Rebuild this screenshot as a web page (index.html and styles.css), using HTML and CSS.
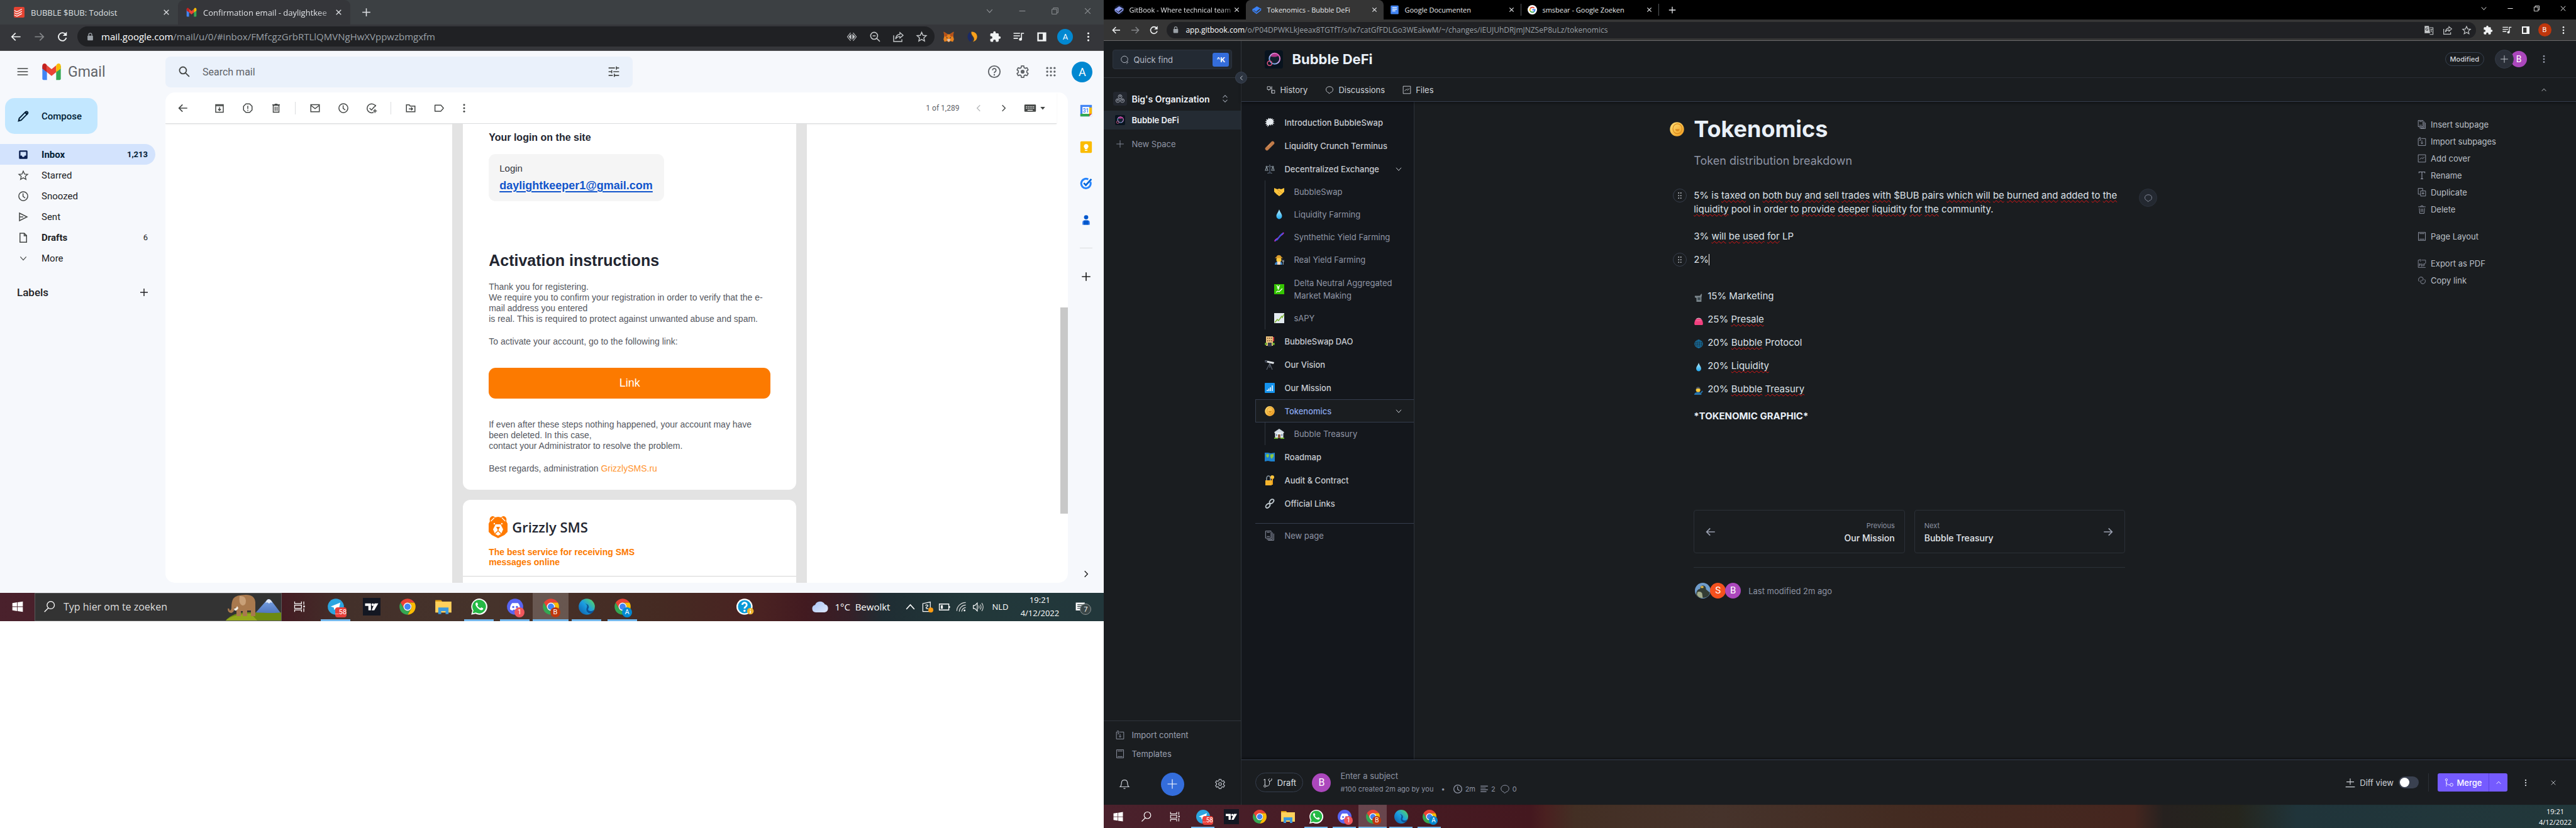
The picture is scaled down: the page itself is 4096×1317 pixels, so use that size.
FILE: index.html
```html
<!DOCTYPE html>
<html lang="en">
<head>
<meta charset="utf-8">
<title>Desktop</title>
<link rel="stylesheet" href="styles.css">
</head>
<body>
<svg class="sprite" aria-hidden="true">
<defs>
<linearGradient id="g-edge" x1="0" y1="1" x2="1" y2="0"><stop offset="0" stop-color="#0c59a4"/><stop offset=".5" stop-color="#1b9de2"/><stop offset="1" stop-color="#5fe04f"/></linearGradient>
<linearGradient id="g-coin" x1="0" y1="0" x2="1" y2="1"><stop offset="0" stop-color="#ffe27a"/><stop offset="1" stop-color="#f09a1c"/></linearGradient>
<linearGradient id="g-drop" x1="0" y1="0" x2="0" y2="1"><stop offset="0" stop-color="#bdf1ff"/><stop offset="1" stop-color="#1ea7ef"/></linearGradient>
<linearGradient id="g-cloud" x1="0" y1="0" x2="1" y2="1"><stop offset="0" stop-color="#a8c4f5"/><stop offset="1" stop-color="#dfe7fb"/></linearGradient>
<linearGradient id="g-bub" x1="0" y1="1" x2="1" y2="0"><stop offset="0" stop-color="#2aa6d8"/><stop offset=".5" stop-color="#c9a8f0"/><stop offset="1" stop-color="#f04aa8"/></linearGradient>
<linearGradient id="g-mtn" x1="0" y1="0" x2="0" y2="1"><stop offset="0" stop-color="#7ba6e8"/><stop offset="1" stop-color="#3a5da8"/></linearGradient>
</defs>
<symbol id="back" viewBox="0 0 24 24"><path d="M21 12H4M11 4.500l-7.500 7.500 7.500 7.500" fill="none" stroke="currentColor" stroke-width="2.200"/></symbol>
<symbol id="fwd" viewBox="0 0 24 24"><path d="M3 12h17M13 4.500l7.500 7.500-7.500 7.500" fill="none" stroke="currentColor" stroke-width="2.200"/></symbol>
<symbol id="reload" viewBox="0 0 24 24"><path d="M19.500 14A8 8 0 1 1 18 7" fill="none" stroke="currentColor" stroke-width="2.400"/><path d="M20.500 2v8h-8z" fill="currentColor"/></symbol>
<symbol id="lock" viewBox="0 0 24 24"><rect x="5" y="9" width="14" height="12" rx="1.500" fill="currentColor"/><path d="M8 10V7a4 4 0 0 1 8 0v3" fill="none" stroke="currentColor" stroke-width="2"/></symbol>
<symbol id="x" viewBox="0 0 24 24"><path d="M5 5l14 14M19 5L5 19" fill="none" stroke="currentColor" stroke-width="2.400"/></symbol>
<symbol id="x-thin" viewBox="0 0 24 24"><path d="M4 4l16 16M20 4L4 20" fill="none" stroke="currentColor" stroke-width="2"/></symbol>
<symbol id="plus" viewBox="0 0 24 24"><path d="M12 3v18M3 12h18" fill="none" stroke="currentColor" stroke-width="2.200"/></symbol>
<symbol id="plus-thin" viewBox="0 0 24 24"><path d="M12 2v20M2 12h20" fill="none" stroke="currentColor" stroke-width="1.500"/></symbol>
<symbol id="down" viewBox="0 0 24 24"><path d="M4 7.500l8 9 8-9" fill="none" stroke="currentColor" stroke-width="2"/></symbol>
<symbol id="up" viewBox="0 0 24 24"><path d="M4 16.500l8-9 8 9" fill="none" stroke="currentColor" stroke-width="2"/></symbol>
<symbol id="left" viewBox="0 0 24 24"><path d="M16 4l-8 8 8 8" fill="none" stroke="currentColor" stroke-width="2.400"/></symbol>
<symbol id="right" viewBox="0 0 24 24"><path d="M8 4l8 8-8 8" fill="none" stroke="currentColor" stroke-width="2.400"/></symbol>
<symbol id="min" viewBox="0 0 24 24"><path d="M3 12h18" stroke="currentColor" stroke-width="2"/></symbol>
<symbol id="restore" viewBox="0 0 24 24"><path d="M3 7h14v14H3zM7 7V3h14v14h-4" fill="none" stroke="currentColor" stroke-width="1.800"/></symbol>
<symbol id="dots" viewBox="0 0 24 24"><g fill="currentColor"><circle cx="12" cy="5" r="2"/><circle cx="12" cy="12" r="2"/><circle cx="12" cy="19" r="2"/></g></symbol>
<symbol id="todoist" viewBox="0 0 24 24"><rect width="24" height="24" rx="3" fill="#e44332"/><path d="M1 8l6 3 11-6M1 13l6 3 11-6M1 18l6 3 11-6" fill="none" stroke="#fff" stroke-width="1.800"/></symbol>
<symbol id="gm" viewBox="0 0 24 24"><path d="M1 5v15.500c0 .8.700 1.500 1.500 1.500H6.500V11z" fill="#4285f4"/><path d="M17.500 22h4c.8 0 1.500-.7 1.500-1.500V5l-5.500 6z" fill="#34a853"/><path d="M6.500 12.500V4.500L12 9l5.500-4.500v8L12 17z" fill="#ea4335"/><path d="M1 8.500V5c0-2.500 2.500-3.600 4.300-2.200L6.500 4.500v8z" fill="#c5221f"/><path d="M23 8.500V5c0-2.500-2.500-3.600-4.300-2.200L17.500 4.500v8z" fill="#fbbc04"/></symbol>
<symbol id="eye" viewBox="0 0 24 24"><path d="M11 6v12l-5.500-6zM13 6v12l5.500-6z" fill="currentColor"/><path d="M9.500 4l-6.500 8 6.500 8M14.500 4l6.500 8-6.500 8" fill="none" stroke="currentColor" stroke-width="1.300"/></symbol>
<symbol id="zoomout" viewBox="0 0 24 24"><circle cx="10" cy="10" r="7" fill="none" stroke="currentColor" stroke-width="2"/><path d="M15 15l6.500 6.500M7 10h6" stroke="currentColor" stroke-width="2"/></symbol>
<symbol id="share" viewBox="0 0 24 24"><path d="M2.500 9v12.500H19V17" fill="none" stroke="currentColor" stroke-width="1.800"/><path d="M15 3.500L21.500 9 15 14.500v-3c-4 0-6.500 1.500-8.500 5 .5-5 3-9 8.500-9.500z" fill="none" stroke="currentColor" stroke-width="1.700"/></symbol>
<symbol id="star" viewBox="0 0 24 24"><path d="M12 3l2.700 6.100 6.600.6-5 4.400 1.500 6.500L12 17.200l-5.800 3.400 1.500-6.500-5-4.400 6.600-.6z" fill="none" stroke="currentColor" stroke-width="1.800"/></symbol>
<symbol id="fox" viewBox="0 0 24 24"><path d="M2 2l8 5h4l8-5-1 9 1.500 6-2 5-5-1.500L12 23l-3.500-2.500L3.500 22l-2-5L3 11z" fill="#e8821e"/><path d="M2 2l8 5-2 5-5-1zM22 2l-8 5 2 5 5-1z" fill="#b5521a"/><path d="M8.500 17.500l2 4h3l2-4-3.500-1.500z" fill="#d7c1b3"/><circle cx="8.500" cy="14" r="1.200" fill="#233447"/><circle cx="15.500" cy="14" r="1.200" fill="#233447"/></symbol>
<symbol id="swirl" viewBox="0 0 24 24"><path d="M9 2C2 6 1 15 8 22c6-3 5-7 3-11S8 5 9 2z" fill="#1b2a66"/><path d="M11 2c9-1 14 8 10 15-2 3-4 4-7 5 4-5 2-8 0-11s-4-5-3-9z" fill="#f9a01b"/></symbol>
<symbol id="puzzle" viewBox="0 0 24 24"><path d="M20.500 11H19V7c0-1.100-.9-2-2-2h-4V3.500a2.500 2.500 0 0 0-5 0V5H4c-1.100 0-2 .9-2 2v3.800h1.500a2.700 2.700 0 0 1 0 5.400H2V20c0 1.100.9 2 2 2h3.800v-1.500a2.700 2.700 0 0 1 5.400 0V22H17c1.100 0 2-.9 2-2v-4h1.500a2.500 2.500 0 0 0 0-5z" fill="currentColor"/></symbol>
<symbol id="music" viewBox="0 0 24 24"><path d="M15 4H2v2h13zm0 5H2v2h13zM2 16h9v-2H2zM17 4v10.200A3 3 0 1 0 19 17V6h4V4z" fill="currentColor"/></symbol>
<symbol id="panel" viewBox="0 0 24 24"><path d="M3 3h18v18H3z M6 6v12h8V6z" fill="currentColor" fill-rule="evenodd"/></symbol>
<symbol id="translate" viewBox="0 0 24 24"><path d="M2 2h10l3 17H2z" fill="currentColor"/><path d="M14 6h8v16h-8" fill="none" stroke="currentColor" stroke-width="1.600"/><path d="M15 10h6M18 9v2c0 3-1 5-2 6M16.500 12c1 3 3 4 4 5" fill="none" stroke="currentColor" stroke-width="1.300"/><path d="M10 7.500a3 3 0 1 0 .5 3H8" fill="none" stroke="#202124" stroke-width="1.400"/></symbol>
<symbol id="menu" viewBox="0 0 24 24"><path d="M2 6h20M2 12h20M2 18h20" stroke="currentColor" stroke-width="2"/></symbol>
<symbol id="search" viewBox="0 0 24 24"><circle cx="9.500" cy="9.500" r="6.500" fill="none" stroke="currentColor" stroke-width="2.200"/><path d="M14.500 14.500l7 7" stroke="currentColor" stroke-width="2.200"/></symbol>
<symbol id="search-l" viewBox="0 0 24 24"><circle cx="14" cy="9" r="7" fill="none" stroke="currentColor" stroke-width="1.600"/><path d="M9.500 14.500L2 22" stroke="currentColor" stroke-width="1.600"/></symbol>
<symbol id="tune" viewBox="0 0 24 24"><path d="M2 5h12M18 5h4M17 2v6M2 12h5M11 12h11M8 9v6M2 19h8M14 19h8M13 16v6" stroke="currentColor" stroke-width="2"/></symbol>
<symbol id="help" viewBox="0 0 24 24"><circle cx="12" cy="12" r="10" fill="none" stroke="currentColor" stroke-width="2"/><path d="M9 9.500a3 3 0 1 1 4.500 2.600c-1 .6-1.500 1.100-1.500 2.400" fill="none" stroke="currentColor" stroke-width="2"/><circle cx="12" cy="17.500" r="1.300" fill="currentColor"/></symbol>
<symbol id="gear" viewBox="0 0 24 24"><path d="M10 2h4l.6 3 2 1.200 3-1 2 3.500-2.300 2v2.600l2.300 2-2 3.500-3-1-2 1.200-.6 3h-4l-.6-3-2-1.200-3 1-2-3.500 2.300-2v-2.600l-2.300-2 2-3.500 3 1 2-1.200z" fill="none" stroke="currentColor" stroke-width="1.900"/><circle cx="12" cy="12" r="3.400" fill="currentColor"/></symbol>
<symbol id="gear-l" viewBox="0 0 24 24"><path d="M10 2h4l.6 3 2 1.200 3-1 2 3.500-2.300 2v2.600l2.300 2-2 3.500-3-1-2 1.200-.6 3h-4l-.6-3-2-1.200-3 1-2-3.500 2.300-2v-2.600l-2.300-2 2-3.500 3 1 2-1.200z" fill="none" stroke="currentColor" stroke-width="1.500"/><circle cx="12" cy="12" r="3" fill="none" stroke="currentColor" stroke-width="1.500"/></symbol>
<symbol id="apps" viewBox="0 0 24 24"><g fill="currentColor"><circle cx="5" cy="5" r="2"/><circle cx="12" cy="5" r="2"/><circle cx="19" cy="5" r="2"/><circle cx="5" cy="12" r="2"/><circle cx="12" cy="12" r="2"/><circle cx="19" cy="12" r="2"/><circle cx="5" cy="19" r="2"/><circle cx="12" cy="19" r="2"/><circle cx="19" cy="19" r="2"/></g></symbol>
<symbol id="pencil" viewBox="0 0 24 24"><path d="M3 21l1.200-5L16.500 3.500c1-1 2.600-1 3.500 0s1 2.500 0 3.500L8 19.500z" fill="none" stroke="currentColor" stroke-width="2.200"/><path d="M3 21l1-4 3 3zM14 5l5 5 2-2.500L17 3z" fill="currentColor"/></symbol>
<symbol id="inbox" viewBox="0 0 24 24"><path d="M5 3h14a2 2 0 0 1 2 2v14a2 2 0 0 1-2 2H5a2 2 0 0 1-2-2V5a2 2 0 0 1 2-2zm1 3v8h3a3 3 0 0 0 6 0h3V6z" fill="currentColor" fill-rule="evenodd"/></symbol>
<symbol id="clock" viewBox="0 0 24 24"><circle cx="12" cy="12" r="9.500" fill="none" stroke="currentColor" stroke-width="2"/><path d="M11.500 6v6.500l4.500 3.500" fill="none" stroke="currentColor" stroke-width="2"/></symbol>
<symbol id="send" viewBox="0 0 24 24"><path d="M4 4l16 8-16 8zM4 12h8" fill="none" stroke="currentColor" stroke-width="2"/></symbol>
<symbol id="doc" viewBox="0 0 24 24"><path d="M5 2.500h9l5 5v14H5zM14 3v5h5" fill="none" stroke="currentColor" stroke-width="2"/></symbol>
<symbol id="archive" viewBox="0 0 24 24"><path d="M4 7V4.500h16V7zM4 7v13.500h16V7M12 10v6M9 14l3 3 3-3" fill="none" stroke="currentColor" stroke-width="2"/></symbol>
<symbol id="report" viewBox="0 0 24 24"><path d="M8 3h8l5 5v8l-5 5H8l-5-5V8z" fill="none" stroke="currentColor" stroke-width="2" stroke-linejoin="round"/><path d="M12 7v6.500M12 15.500v2" stroke="currentColor" stroke-width="2"/></symbol>
<symbol id="trash" viewBox="0 0 24 24"><path d="M6 6h12v14.500H6zM4 5h16M9 3.500h6M10 9v9M14 9v9" fill="none" stroke="currentColor" stroke-width="2"/></symbol>
<symbol id="mail" viewBox="0 0 24 24"><path d="M3 4.500h18v15H3zM3 6l9 7 9-7" fill="none" stroke="currentColor" stroke-width="2"/></symbol>
<symbol id="taskadd" viewBox="0 0 24 24"><path d="M16 21a9.500 9.500 0 1 1 4.500-12.500M7.500 12l4 4L21 5.500M19 14v8M15 18h8" fill="none" stroke="currentColor" stroke-width="2"/></symbol>
<symbol id="folder" viewBox="0 0 24 24"><path d="M3 5h6l2 2.500h10V19.500H3zM8 13.500h8M13 10.500l3 3-3 3" fill="none" stroke="currentColor" stroke-width="2"/></symbol>
<symbol id="label" viewBox="0 0 24 24"><path d="M3.500 5.500H16l5.500 6.500L16 18.500H3.500z" fill="none" stroke="currentColor" stroke-width="2" stroke-linejoin="round"/></symbol>
<symbol id="keyb" viewBox="0 0 24 24"><rect x="1" y="5" width="22" height="14" rx="1.500" fill="currentColor"/><path d="M4 9h16M4 12h16" stroke="#fff" stroke-width="1.500" stroke-dasharray="2 1.400"/><path d="M7 16h10" stroke="#fff" stroke-width="1.500"/></symbol>
<symbol id="caret" viewBox="0 0 24 24"><path d="M3 7h18l-9 11z" fill="currentColor"/></symbol>
<symbol id="keep" viewBox="0 0 24 24"><rect x="1" y="1" width="22" height="22" rx="2" fill="#fbbc04"/><path d="M12 6a4.500 4.500 0 0 0-2.500 8.200V16h5v-1.800A4.500 4.500 0 0 0 12 6zM9.500 17.500h5v1.800h-5z" fill="#fff"/></symbol>
<symbol id="tasks" viewBox="0 0 24 24"><path d="M20 8.500A9 9 0 1 1 16 4" fill="none" stroke="#2684fc" stroke-width="3.600"/><path d="M7.500 11l4 4L22 3.500" fill="none" stroke="#0066da" stroke-width="3.200"/></symbol>
<symbol id="person" viewBox="0 0 24 24"><circle cx="12" cy="6" r="4.500" fill="#0057cc"/><path d="M4 22v-5c0-3 2-4.500 4-4.500h8c2 0 4 1.500 4 4.500v5z" fill="#4f8df0"/><path d="M6.500 22v-6c0-2 1-3.500 3-3.500h5c2 0 3 1.500 3 3.500v6z" fill="#0057cc"/></symbol>
<symbol id="win" viewBox="0 0 24 24"><path d="M2 5l9-1.300V11.500H2zM12 3.600L22 2v9.500H12zM2 12.500h9v7.800L2 19zM12 12.500h10V22l-10-1.500z" fill="#fff"/></symbol>
<symbol id="tview" viewBox="0 0 24 24"><path d="M3 2v4h13V2M3 22v-4h13v4M3 9h13v6H3zM20.500 2v6M20.500 15v7" fill="none" stroke="#fff" stroke-width="1.500"/><rect x="19.500" y="10" width="3" height="3" fill="#fff"/></symbol>
<symbol id="tg" viewBox="0 0 24 24"><circle cx="12" cy="12" r="11" fill="#2ca5e0"/><path d="M5 11.800L18 6.500l-2.300 11-4-3-2 2-.5-3.500z" fill="#fff"/></symbol>
<symbol id="tv" viewBox="0 0 24 24"><rect width="24" height="24" fill="#131722"/><path d="M3 7.500h8v9.500H7.500v-6H3zM15.500 17h-3.600L16 7.500h5z" fill="#fff"/><circle cx="13.500" cy="9.300" r="1.800" fill="#fff"/></symbol>
<symbol id="chrome" viewBox="0 0 24 24"><path d="M2.500 6.500A11 11 0 0 1 21.500 6.500H12L7.200 14.700z" fill="#ea4335"/><path d="M21.500 6.500H12a5.500 5.500 0 0 1 4.800 8.300L12 23A11 11 0 0 0 21.500 6.500z" fill="#fbbc04"/><path d="M2.500 6.500l4.700 8.200a5.500 5.500 0 0 0 9.600.1L12 23A11 11 0 0 1 2.500 6.500z" fill="#34a853"/><circle cx="12" cy="12" r="5.500" fill="#fff"/><circle cx="12" cy="12" r="4.300" fill="#4285f4"/></symbol>
<symbol id="files" viewBox="0 0 24 24"><path d="M1 3h8l2 3h-10z" fill="#e0a012"/><path d="M1 5h22v15H1z" fill="#ffd15c"/><path d="M5 22v-9h14v9h-4v-4H9v4z" fill="#3c99dc"/></symbol>
<symbol id="wa" viewBox="0 0 24 24"><path d="M1 23l1.600-5.500A11 11 0 1 1 7 21.700z" fill="#fff"/><path d="M3 21l1.200-4A9.300 9.300 0 1 1 7.500 20z" fill="#25b945"/><path d="M8 6.500c-1.500.8-1.500 3 .5 5.800 2.300 3 5.500 5 7.500 4.200 1.300-.6 1.600-1.600 1.400-2.400l-2.600-1.300-1.200 1.400c-2-.7-3.300-2-4.200-3.900l1-1.300-1-2.500z" fill="#fff"/></symbol>
<symbol id="discord" viewBox="0 0 24 24"><circle cx="12" cy="12" r="11" fill="#5865f2"/><path d="M8 7l8 0c2 2 3 5.500 3 8.500-1 1-2 1.500-3.500 1.800L14.500 16h-5l-1 1.300C7 17 6 16.500 5 15.500 5 12.500 6 9 8 7z" fill="#fff"/><circle cx="9.500" cy="12.500" r="1.500" fill="#5865f2"/><circle cx="14.500" cy="12.500" r="1.500" fill="#5865f2"/></symbol>
<symbol id="edge" viewBox="0 0 24 24"><circle cx="12" cy="12" r="11" fill="url(#g-edge)"/><path d="M23 13c0 3-3 5-6 5-2 0-3.500-1-3.200-2.500.2-.8 1-1.500 1-3 0-2.500-2-4.500-5-4.500 3 1 3 4 2 6-1.500 4 2 8 7 7l2-1.500z" fill="#0a3e82" opacity=".75"/></symbol>
<symbol id="gethelp" viewBox="0 0 24 24"><circle cx="11" cy="12" r="11" fill="#fff"/><circle cx="11" cy="12" r="9" fill="#0a9bd8"/><path d="M8 9.500a3 3 0 1 1 4.500 2.600c-1 .6-1.500 1.100-1.500 2.400" fill="none" stroke="#fff" stroke-width="2.400"/><circle cx="11" cy="17.500" r="1.500" fill="#fff"/><circle cx="19" cy="18" r="4.500" fill="#f0b32c"/><path d="M19 15v1.300M19 17.300V21" stroke="#fff" stroke-width="1.300"/></symbol>
<symbol id="cloud" viewBox="0 0 28 24"><path d="M7 21a6 6 0 0 1-1-11.800 8.500 8.500 0 0 1 15.500-1A6.500 6.500 0 0 1 21 21z" fill="url(#g-cloud)"/></symbol>
<symbol id="usb" viewBox="0 0 24 24"><path d="M3 5l15-3v19H3zM8 9c4-3 7 0 4 2-4 2-3 5 2 4" fill="none" stroke="#fff" stroke-width="1.500"/><circle cx="19" cy="18" r="5" fill="#ff9c12"/></symbol>
<symbol id="batt" viewBox="0 0 24 24"><path d="M2 6h19v12H2zM22.500 10v4" fill="none" stroke="#fff" stroke-width="1.700"/><path d="M5 8.500h4v7H5z" fill="#fff"/></symbol>
<symbol id="wifi" viewBox="0 0 24 24"><path d="M3 20C3 11 11 3 21 3M8 21c0-7 6-13 13-13M13 21c0-4 3.500-8 8-8" fill="none" stroke="#ddd" stroke-width="1.500"/><circle cx="18.500" cy="19" r="1.800" fill="#fff"/></symbol>
<symbol id="vol" viewBox="0 0 24 24"><path d="M2 9h3l5-5v16l-5-5H2z" fill="none" stroke="#fff" stroke-width="1.500"/><path d="M13 9c1 2 1 4 0 6M16 7c2 3 2 7 0 10M19 4c3.500 5 3.500 11 0 16" fill="none" stroke="#ddd" stroke-width="1.400"/></symbol>
<symbol id="notif" viewBox="0 0 24 24"><path d="M2 3h18v16h-5v3l-3-3H2z" fill="#fff"/><path d="M5 7.500h12M5 11h12M5 14.500h8" stroke="#2a3b3d" stroke-width="1.500"/></symbol>
<symbol id="gb" viewBox="0 0 24 24"><path d="M2 10l10-7 9 5.500-9.500 7z" fill="currentColor"/><path d="M2 10v4.500l9 6.500 10.500-8V8.500M2 10l9.500 6.500" fill="none" stroke="currentColor" stroke-width="2.600"/></symbol>
<symbol id="gdoc" viewBox="0 0 24 24"><rect x="2" y="1" width="20" height="22" rx="2" fill="#4285f4"/><path d="M6 7h12M6 11h12M6 15h8" stroke="#fff" stroke-width="2"/></symbol>
<symbol id="goog" viewBox="0 0 24 24"><circle cx="12" cy="12" r="12" fill="#fff"/><g fill="none" stroke-width="3"><path d="M17 8A6.500 6.500 0 0 0 6.500 9" stroke="#ea4335"/><path d="M6.500 9a6.500 6.500 0 0 0 0 6" stroke="#fbbc04"/><path d="M6.500 15A6.500 6.500 0 0 0 16 17" stroke="#34a853"/><path d="M16 17a6 6 0 0 0 2.500-5H12" stroke="#4285f4"/></g></symbol>
<symbol id="bub" viewBox="0 0 24 24"><rect width="24" height="24" rx="3" fill="#08131e"/><circle cx="13" cy="11" r="7" fill="#10202e" stroke="url(#g-bub)" stroke-width="1.600"/><path d="M7.500 8c2-4 8-5 11-1-3 2-7 2-11 1z" fill="#d63aa0" opacity=".8"/><circle cx="6.500" cy="17" r="3" fill="none" stroke="#e0537d" stroke-width="1.300"/></symbol>
<symbol id="org" viewBox="0 0 24 24"><g fill="none" stroke="currentColor" stroke-width="1.300"><circle cx="12" cy="7" r="4.500"/><circle cx="6.500" cy="16.500" r="4.500"/><circle cx="17.500" cy="16.500" r="4.500"/><circle cx="12" cy="6" r="1.500"/><circle cx="6.500" cy="15.500" r="1.500"/><circle cx="17.500" cy="15.500" r="1.500"/></g></symbol>
<symbol id="updown" viewBox="0 0 24 24"><path d="M6 9l6-6 6 6M6 15l6 6 6-6" fill="none" stroke="currentColor" stroke-width="1.800"/></symbol>
<symbol id="qf" viewBox="0 0 24 24"><circle cx="12" cy="11" r="9" fill="none" stroke="currentColor" stroke-width="1.600"/><path d="M18 18c3-1 4 1 3 2s-3 1-3 3" fill="none" stroke="currentColor" stroke-width="1.600"/></symbol>
<symbol id="hist" viewBox="0 0 24 24"><path d="M2 3h8v8H2zM14 13h8v8h-8zM10 7h4V2M14 7v14M6 11v3" fill="none" stroke="currentColor" stroke-width="1.500"/></symbol>
<symbol id="disc" viewBox="0 0 24 24"><path d="M9 19c-9-2-9-16 3-16s12 14 3 16l-4 3z" fill="none" stroke="currentColor" stroke-width="1.500"/></symbol>
<symbol id="pic" viewBox="0 0 24 24"><path d="M2 2h20v20H2zM6 15l5-5 3 3 5-5M14 8h1" fill="none" stroke="currentColor" stroke-width="1.500"/></symbol>
<symbol id="pages" viewBox="0 0 24 24"><path d="M2 1h13v17H2zM5 4h7M5 14h7M18 4v17H5M21.500 7v16H8" fill="none" stroke="currentColor" stroke-width="1.500"/></symbol>
<symbol id="imp" viewBox="0 0 24 24"><path d="M7 4H2v19h20V4H11M12 9v9M9 15l3 3.500 3-3.500M4 1c5-1 5 1 4 8H5" fill="none" stroke="currentColor" stroke-width="1.500"/></symbol>
<symbol id="tee" viewBox="0 0 24 24"><path d="M4 6V2.500h16V6M12 3v18M8.500 21.500h7" fill="none" stroke="currentColor" stroke-width="1.800"/></symbol>
<symbol id="dup" viewBox="0 0 24 24"><path d="M8 17H2V1h12v6M8.500 8H22v14H8.500zM15 11v7M11.500 14.500h7" fill="none" stroke="currentColor" stroke-width="1.500"/></symbol>
<symbol id="bin" viewBox="0 0 24 24"><path d="M2 5h20M8 5c0-4 8-4 8 0M5 9l1 14h12l1-14M10 10v9M14 10v9" fill="none" stroke="currentColor" stroke-width="1.500"/></symbol>
<symbol id="page" viewBox="0 0 24 24"><path d="M2.500 1h19v22h-19zM5 4.500h14M5 19.500h14" fill="none" stroke="currentColor" stroke-width="1.500"/></symbol>
<symbol id="pdf" viewBox="0 0 24 24"><path d="M7 3H2v20h20M22 12V3H11M6 1c3-1 3 2 2 6M5 20v-7h2.500v3.500H5M11 13v7c4 0 4-7 0-7M17 20v-7h4M17 16h3" fill="none" stroke="currentColor" stroke-width="1.300"/></symbol>
<symbol id="chain" viewBox="0 0 24 24"><path d="M5 15C0 11 4 2 10 3c6 0 7 7 3 10M19 9c5 4 1 13-5 12-6 0-7-7-3-10" fill="none" stroke="currentColor" stroke-width="1.600"/></symbol>
<symbol id="bell" viewBox="0 0 24 24"><path d="M3 18c3-2 2-6 3-10 1-6 11-6 12 0 1 4 0 8 3 10zM10 21.500h4" fill="none" stroke="currentColor" stroke-width="1.600"/></symbol>
<symbol id="branch" viewBox="0 0 24 24"><g fill="none" stroke="currentColor" stroke-width="1.500"><circle cx="5" cy="20" r="2.500"/><path d="M5 17.500V3M2 6l3-3M8 20c8 0 8-4 8-11M16 9l-3-4 3-3M16 9l5-3V2"/></g></symbol>
<symbol id="merge" viewBox="0 0 24 24"><g fill="none" stroke="currentColor" stroke-width="1.500"><circle cx="5" cy="4" r="2.800"/><path d="M5 7v15M5 11c1 5 4 7 10 7"/><circle cx="19" cy="17.500" r="4"/></g></symbol>
<symbol id="pm" viewBox="0 0 24 24"><path d="M12 2v15M3 10h18M1 22h22" fill="none" stroke="currentColor" stroke-width="1.700"/></symbol>
<symbol id="lines" viewBox="0 0 24 24"><path d="M2 4h20M2 9h14M2 14h20M2 19h16" stroke="currentColor" stroke-width="2"/></symbol>
<symbol id="grip" viewBox="0 0 24 24"><g fill="currentColor"><circle cx="9" cy="5" r="1.500"/><circle cx="15" cy="5" r="1.500"/><circle cx="9" cy="12" r="1.500"/><circle cx="15" cy="12" r="1.500"/><circle cx="9" cy="19" r="1.500"/><circle cx="15" cy="19" r="1.500"/></g></symbol>
<symbol id="e-splash" viewBox="0 0 16 16"><path d="M8 2l1.500-1.500.5 2L12.500 1 12 3.500l3-.5-2 2.500 2.500 1-2.500 1 2.500 2.500-3-.5 1 3-3-2-.5 2.500-2-2L4 15.500 5 12l-3 1 1.500-2.500L.500 10 3 8 .500 6l3-.5L2 2.500l3 1L6 .500z" fill="#e6ebef"/></symbol>
<symbol id="e-pill" viewBox="0 0 16 16"><path d="M3.500 12.500l9-9" stroke="#c17b49" stroke-width="5.500" stroke-linecap="round"/><path d="M5 9l4-4" stroke="#dba070" stroke-width="1" stroke-linecap="round"/></symbol>
<symbol id="e-scale" viewBox="0 0 16 16"><path d="M8 1v13M1.500 4h13M4.500 14.500h7M3 4L1 10h4zM13 4l-2 6h4z" fill="none" stroke="#8b98a1" stroke-width="1.200"/><path d="M8 2v12M5.500 14h5" stroke="#3c4654" stroke-width="2"/></symbol>
<symbol id="e-hands" viewBox="0 0 16 16"><path d="M0 2l5 2 3-1 3 1 5-2v6l-5 5-3 2-4-3-4-4z" fill="#fcc43c"/><path d="M5 5l4 2 3 3M6 9l3 3" stroke="#d8922a" fill="none"/></symbol>
<symbol id="e-drop" viewBox="0 0 16 16"><path d="M8 0c1 4 4.500 7 4.500 10.500a4.500 5 0 0 1-9 0C3.500 7 7 4 8 0z" fill="url(#g-drop)"/></symbol>
<symbol id="e-dna" viewBox="0 0 16 16"><path d="M1 15c1-5 5-3 7-7s5-3 7-7" fill="none" stroke="#c02ad0" stroke-width="2.200"/><path d="M2 13c5 1 3-3 6-5s2-5 6-6" fill="none" stroke="#2b5be0" stroke-width="1.800"/></symbol>
<symbol id="e-farmer" viewBox="0 0 16 16"><circle cx="7.500" cy="8" r="4" fill="#fccb3e"/><path d="M1 5.500h13L11 3c-.5-3-6.500-3-7 0z" fill="#d99a2e"/><path d="M1 16c0-4 3-5 6.500-5s5.500 1 5.500 5z" fill="#3d86c8"/><path d="M5 11h5v5H5z" fill="#f4d9c0"/><path d="M14.500 16V9M13 8v3h3V8" stroke="#8b98a1" fill="none"/></symbol>
<symbol id="e-yen" viewBox="0 0 16 16"><rect width="16" height="16" fill="#35c500"/><path d="M4 2l2.500 3L9 2M6.500 5v4M4.500 6h4M3 13l3-2 2 1 5-5" fill="none" stroke="#fff" stroke-width="1.300"/></symbol>
<symbol id="e-chart" viewBox="0 0 16 16"><rect width="16" height="16" fill="#e3eaf0"/><path d="M1 15l4-5 2 2 5-7 1 2 2.500-5" fill="none" stroke="#7db52a" stroke-width="1.400"/></symbol>
<symbol id="e-hotel" viewBox="0 0 16 16"><path d="M2 0h11v15H2z" fill="#e9c17e"/><path d="M4 2h1.500v2H4zM7 2h1.500v2H7zM10 2h1.500v2H10zM4 6h1.500v2H4zM7 6h1.500v2H7zM10 6h1.500v2H10z" fill="#8b5a3c"/><path d="M13 1h2v7h-2z" fill="#c83b3b"/><path d="M5 10h6v6H5z" fill="#33384a"/><circle cx="2" cy="12" r="2" fill="#6cae2e"/><circle cx="14" cy="12" r="2" fill="#6cae2e"/></symbol>
<symbol id="e-scope" viewBox="0 0 16 16"><path d="M0 1l15 3-1 3L1 4z" fill="#dfe4e8"/><path d="M0 1l4 1-.5 3L0 4z" fill="#3a4150"/><path d="M8 6L3 16M8 6l4 10M8 6v7" stroke="#6a7380" stroke-width="1"/></symbol>
<symbol id="e-bars" viewBox="0 0 16 16"><rect width="16" height="16" rx="1" fill="#1493ee"/><path d="M4 13v-2M6.500 13V9M9 13V7M12 13V4" stroke="#fff" stroke-width="1.500"/></symbol>
<symbol id="e-coin" viewBox="0 0 16 16"><ellipse cx="8" cy="8" rx="7.800" ry="7.900" fill="url(#g-coin)"/><ellipse cx="8.500" cy="7.500" rx="5" ry="5.500" fill="none" stroke="#d98a1b" stroke-width=".8"/><path d="M6 8c1 3 4 3 5 0" fill="#d98a1b"/></symbol>
<symbol id="e-bank" viewBox="0 0 16 16"><path d="M8 0l7.500 5v2H.500V5z" fill="#cfd8e0"/><path d="M1.500 6h13v9h-13z" fill="#e9eef2"/><path d="M6 9h4v6H6z" fill="#8a5a3e"/><path d="M3 8h1.500v4H3zM11.500 8H13v4h-1.500z" fill="#6a86a8"/><path d="M0 14h6v2H0zM10 14h6v2h-6z" fill="#6cae2e"/></symbol>
<symbol id="e-map" viewBox="0 0 16 16"><path d="M0 1l5 0 5 1 6-1v14l-6 0-5-1-5 1z" fill="#1e82cf"/><path d="M2 4l4-1 1 3-2 3-2-1zM9 4l5-1 0 4-3 4-2-3z" fill="#8cc63f"/></symbol>
<symbol id="e-lock" viewBox="0 0 16 16"><path d="M3 8V5a3 4 0 0 1 6 0v3" fill="none" stroke="#8b98a1" stroke-width="1.600"/><path d="M1 8h10v8H1z" fill="#f7b42c"/><circle cx="12" cy="3" r="3" fill="#fcc43c"/><path d="M12 5v10" stroke="#e89f1e" stroke-width="2"/></symbol>
<symbol id="e-link" viewBox="0 0 16 16"><g fill="none" stroke="#c3ccd2" stroke-width="1.800"><ellipse cx="11" cy="4.500" rx="2.600" ry="4" transform="rotate(45 11 4.500)"/><ellipse cx="5" cy="11.500" rx="2.600" ry="4" transform="rotate(45 5 11.500)"/></g></symbol>
<symbol id="e-cam" viewBox="0 0 16 16"><path d="M1 5h9l3-4 1 2-1 5v8H4V9L1 8z" fill="#7c878d"/><path d="M6 8h5v5H6z" fill="#3c4950"/></symbol>
<symbol id="e-purse" viewBox="0 0 16 16"><path d="M3 5c3-2 7-2 10 0 3 4 4 11 1 11H2c-3 0-2-7 1-11z" fill="#f2407f"/><path d="M4 5c2-2 6-2 8 0" stroke="#c9b6c0" fill="none" stroke-width="1.500"/><path d="M3 8h10" stroke="#ff7fae"/></symbol>
<symbol id="e-globe" viewBox="0 0 16 16"><g fill="none" stroke="#1784bf" stroke-width="1.100"><circle cx="8" cy="8" r="7"/><ellipse cx="8" cy="8" rx="3.500" ry="7"/><path d="M1 8h14M2 4.500h12M2 11.500h12M8 1v14"/></g></symbol>
<symbol id="e-judge" viewBox="0 0 16 16"><circle cx="7" cy="7" r="4" fill="#fccb3e"/><path d="M3 6c0-6 8-6 8 0-2-2-6-2-8 0z" fill="#4a5560"/><path d="M0 16c0-4 3-5 7-5s6 1 6 5z" fill="#2674ad"/><path d="M12 13l3-4" stroke="#2674ad" stroke-width="2"/></symbol>
</svg>

<main class="desk">
<section class="win win-left">
  <header class="tabs">
    <div class="tab"><svg class="fav"><use href="#todoist"/></svg><span class="tt">BUBBLE $BUB: Todoist</span><button class="cls" aria-label="Close tab"><svg><use href="#x"/></svg></button></div>
    <div class="tab on"><svg class="fav"><use href="#gm"/></svg><span class="tt fade">Confirmation email - daylightkee</span><button class="cls" aria-label="Close tab"><svg><use href="#x"/></svg></button></div>
    <button class="newtab" aria-label="New tab"><svg><use href="#plus"/></svg></button>
    <div class="wctl"><button aria-label="Tab search"><svg><use href="#down"/></svg></button><button aria-label="Minimise"><svg><use href="#min"/></svg></button><button aria-label="Restore"><svg><use href="#restore"/></svg></button><button aria-label="Close"><svg><use href="#x-thin"/></svg></button></div>
  </header>
  <nav class="bar">
    <button aria-label="Back"><svg><use href="#back"/></svg></button><button class="dim" aria-label="Forward"><svg><use href="#fwd"/></svg></button><button aria-label="Reload"><svg><use href="#reload"/></svg></button>
    <div class="omni"><svg class="lock"><use href="#lock"/></svg><span class="url"><b>mail.google.com</b>/mail/u/0/#inbox/FMfcgzGrbRTLlQMVNgHwXVppwzbmgxfm</span>
      <button aria-label="Privacy"><svg><use href="#eye"/></svg></button><button aria-label="Zoom"><svg><use href="#zoomout"/></svg></button><button aria-label="Share"><svg><use href="#share"/></svg></button><button aria-label="Bookmark"><svg><use href="#star"/></svg></button></div>
    <button aria-label="Wallet"><svg><use href="#fox"/></svg></button><button aria-label="Swirl"><svg><use href="#swirl"/></svg></button><button aria-label="Extensions"><svg><use href="#puzzle"/></svg></button><button aria-label="Media"><svg><use href="#music"/></svg></button><button aria-label="Side panel"><svg><use href="#panel"/></svg></button><button aria-label="Profile"><span class="ava blue">A</span></button><button aria-label="Menu"><svg><use href="#dots"/></svg></button>
  </nav>

  <div class="gmail">
    <header class="ghead">
      <div class="brand"><button aria-label="Main menu"><svg class="s20"><use href="#menu"/></svg></button><svg class="glogo"><use href="#gm"/></svg><span class="gname">Gmail</span></div>
      <div class="gsearch"><svg class="s20"><use href="#search"/></svg><input type="text" placeholder="Search mail" aria-label="Search mail"><button aria-label="Search options"><svg class="s20"><use href="#tune"/></svg></button></div>
      <div class="gtools"><button aria-label="Support"><svg class="s22"><use href="#help"/></svg></button><button aria-label="Settings"><svg class="s22"><use href="#gear"/></svg></button><button aria-label="Apps"><svg class="s20"><use href="#apps"/></svg></button><button class="acct" aria-label="Account">A</button></div>
    </header>
    <aside class="gnav">
      <button class="compose"><svg class="s20"><use href="#pencil"/></svg>Compose</button>
      <a class="on" href="#inbox"><svg class="s18"><use href="#inbox"/></svg><span>Inbox</span><i>1,213</i></a>
      <a href="#starred"><svg class="s18"><use href="#star"/></svg><span>Starred</span></a>
      <a href="#snoozed"><svg class="s18"><use href="#clock"/></svg><span>Snoozed</span></a>
      <a href="#sent"><svg class="s18"><use href="#send"/></svg><span>Sent</span></a>
      <a class="bold" href="#drafts"><svg class="s18"><use href="#doc"/></svg><span>Drafts</span><i>6</i></a>
      <a href="#more"><svg class="s14"><use href="#down"/></svg><span>More</span></a>
      <div class="labels"><span>Labels</span><button aria-label="Create label"><svg class="s16"><use href="#plus"/></svg></button></div>
    </aside>
    <section class="gcard">
      <div class="gbar">
        <button class="first" aria-label="Back to inbox"><svg><use href="#back"/></svg></button>
        <button aria-label="Archive"><svg><use href="#archive"/></svg></button><button aria-label="Report spam"><svg><use href="#report"/></svg></button><button aria-label="Delete"><svg><use href="#trash"/></svg></button><hr>
        <button aria-label="Mark as unread"><svg><use href="#mail"/></svg></button><button aria-label="Snooze"><svg><use href="#clock"/></svg></button><button aria-label="Add to tasks"><svg><use href="#taskadd"/></svg></button><hr>
        <button aria-label="Move to"><svg><use href="#folder"/></svg></button><button aria-label="Labels"><svg><use href="#label"/></svg></button><button class="dd" aria-label="More"><svg><use href="#dots"/></svg></button>
        <span class="count">1 of 1,289</span><button class="faint pg" aria-label="Newer"><svg class="s14"><use href="#left"/></svg></button><button class="pg" aria-label="Older"><svg class="s14"><use href="#right"/></svg></button><button class="kb" aria-label="Input tools"><svg class="s20"><use href="#keyb"/></svg><svg class="s10"><use href="#caret"/></svg></button>
      </div>
      <div class="gscroll">
        <article class="mail">
          <div class="mcard first">
            <h3>Your login on the site</h3>
            <div class="login"><span>Login</span><a href="mailto:daylightkeeper1@gmail.com">daylightkeeper1@gmail.com</a></div>
            <h2>Activation instructions</h2>
            <p>Thank you for registering.<br>We require you to confirm your registration in order to verify that the e-<br>mail address you entered<br>is real. This is required to protect against unwanted abuse and spam.</p>
            <p>To activate your account, go to the following link:</p>
            <button class="link">Link</button>
            <p>If even after these steps nothing happened, your account may have<br>been deleted. In this case,<br>contact your Administrator to resolve the problem.</p>
            <p>Best regards, administration <a href="#grizzly">GrizzlySMS.ru</a></p>
          </div>
          <div class="mcard second">
            <div class="grizzly"><svg viewBox="0 0 30 36"><path d="M2 9C0 3 6-2 10 3l5-1 5 1c4-5 10 0 8 6l2 4v13l-5 5-10 5-10-5-5-5V13z" fill="#ff7a00"/><path d="M3.500 9L9 3.500M26.500 9L21 3.500" stroke="#fff" stroke-width="1.200"/><path d="M11 14h8l4 8-3 7-5 3-5-3-3-7z" fill="#fff"/><path d="M12 18h6l-2 4h-2z" fill="#ff7a00"/><path d="M10 29l5-5 5 5M15 21v4" fill="none" stroke="#ff7a00" stroke-width="1.500"/><circle cx="9" cy="13" r="1.200" fill="#fff"/><circle cx="21" cy="13" r="1.200" fill="#fff"/></svg>Grizzly SMS</div>
            <strong>The best service for receiving SMS<br>messages online</strong>
            <hr>
          </div>
        </article>
        <div class="thumb"></div>
      </div>
    </section>
    <aside class="gside">
      <button aria-label="Calendar"><svg class="s20" viewBox="0 0 24 24"><path d="M1 1h22v22H1z" fill="#4285f4"/><path d="M18 6h5v12h-5z" fill="#fbbc04"/><path d="M6 18h12v5H1v-5z" fill="#34a853"/><path d="M18 18h5l-5 5z" fill="#ea4335"/><path d="M18 23l5-5v5z" fill="#f7f9fc"/><path d="M5 5h13v13H5z" fill="#fff"/><text x="11.500" y="15.500" text-anchor="middle" class="cal">31</text></svg></button>
      <button aria-label="Keep"><svg class="s20"><use href="#keep"/></svg></button>
      <button aria-label="Tasks"><svg class="s20"><use href="#tasks"/></svg></button>
      <button aria-label="Contacts"><svg class="s18"><use href="#person"/></svg></button>
      <hr>
      <button aria-label="Get add-ons"><svg class="s18"><use href="#plus"/></svg></button>
      <button class="hide" aria-label="Hide side panel"><svg class="s14"><use href="#right"/></svg></button>
    </aside>
  </div>

  <footer class="task task-left">
    <button class="start" aria-label="Start"><svg class="s20"><use href="#win"/></svg></button>
    <label class="tsearch"><svg class="s20"><use href="#search-l"/></svg><input type="text" placeholder="Typ hier om te zoeken" aria-label="Typ hier om te zoeken">
      <svg class="eleph" viewBox="0 0 88 43"><path d="M48 30L64 12q4-6 9 0l15 20v11H48z" fill="url(#g-mtn)"/><path d="M65 11q3-4 7 0l2 4-3-1-2 2-3-2-3 1z" fill="#dfe8f8"/><path d="M0 43Q12 28 45 30t43 0v13z" fill="#6d8a12"/><path d="M0 43Q10 33 40 32l10 11z" fill="#93a81c"/><path d="M12 8q4-6 20-6 14 0 15 12v22h-7v-9h-6v9h-7v-8h-3v8h-7V26l-3-4q0 7-5 9-6 0-6-7 3-1 3 3 3 0 3-5 0-9 3-14z" fill="#a9794e"/><path d="M22 4q9-1 10 7 0 9-6 8-6-3-4-15z" fill="#c9a078"/><path d="M13 24q4 0 5-4l2 3q-2 5-6 4z" fill="#f4efe6"/></svg></label>
    <button class="tv" aria-label="Task view"><svg class="s20"><use href="#tview"/></svg></button>
    <div class="apps">
      <button class="run" aria-label="Telegram"><svg><use href="#tg"/></svg><em class="bd red">..58</em></button><button aria-label="TradingView"><svg><use href="#tv"/></svg></button><button aria-label="Chrome"><svg><use href="#chrome"/></svg></button><button aria-label="Explorer"><svg><use href="#files"/></svg></button><button class="run" aria-label="WhatsApp"><svg><use href="#wa"/></svg></button><button class="run" aria-label="Discord"><svg><use href="#discord"/></svg><em class="bd rose">1</em></button><button class="run cur" aria-label="Chrome B"><svg><use href="#chrome"/></svg><em class="bd rust">B</em></button><button class="run" aria-label="Edge"><svg><use href="#edge"/></svg></button><button class="run" aria-label="Chrome A"><svg><use href="#chrome"/></svg><em class="bd sky">A</em></button>
    </div>
    <button class="gh" aria-label="Get help"><svg><use href="#gethelp"/></svg></button>
    <div class="tray"><svg class="cloud"><use href="#cloud"/></svg><span class="wx">1°C&nbsp; Bewolkt</span>
      <button aria-label="Hidden icons"><svg><use href="#up"/></svg></button><button aria-label="Update"><svg><use href="#usb"/></svg></button><button aria-label="Battery"><svg><use href="#batt"/></svg></button><button aria-label="Network"><svg><use href="#wifi"/></svg></button><button aria-label="Volume"><svg><use href="#vol"/></svg></button><span class="lang">NLD</span>
      <time class="clk">19:21<br>4/12/2022</time><button class="nt" aria-label="Notifications"><svg><use href="#notif"/></svg><em>7</em></button></div>
  </footer>
</section>

<section class="win win-right">
  <header class="tabs">
    <div class="tab"><svg class="fav c-lav"><use href="#gb"/></svg><span class="tt fade">GitBook - Where technical team</span><button class="cls" aria-label="Close tab"><svg><use href="#x"/></svg></button></div>
    <div class="tab on"><svg class="fav c-blue"><use href="#gb"/></svg><span class="tt">Tokenomics - Bubble DeFi</span><button class="cls" aria-label="Close tab"><svg><use href="#x"/></svg></button></div>
    <div class="tab sep"><svg class="fav"><use href="#gdoc"/></svg><span class="tt">Google Documenten</span><button class="cls" aria-label="Close tab"><svg><use href="#x"/></svg></button></div>
    <div class="tab sep"><svg class="fav"><use href="#goog"/></svg><span class="tt">smsbear - Google Zoeken</span><button class="cls" aria-label="Close tab"><svg><use href="#x"/></svg></button></div>
    <button class="newtab" aria-label="New tab"><svg><use href="#plus"/></svg></button>
    <div class="wctl"><button aria-label="Tab search"><svg><use href="#down"/></svg></button><button aria-label="Minimise"><svg><use href="#min"/></svg></button><button aria-label="Restore"><svg><use href="#restore"/></svg></button><button aria-label="Close"><svg><use href="#x-thin"/></svg></button></div>
  </header>
  <nav class="bar">
    <button aria-label="Back"><svg><use href="#back"/></svg></button><button class="dim" aria-label="Forward"><svg><use href="#fwd"/></svg></button><button aria-label="Reload"><svg><use href="#reload"/></svg></button>
    <div class="omni"><svg class="lock"><use href="#lock"/></svg><span class="url"><b>app.gitbook.com</b>/o/P04DPWKLkJeeax8TGTfT/s/Ix7catGfFDLGo3WEakwM/~/changes/iEUJUhDRjmJNZSeP8uLz/tokenomics</span>
      <button aria-label="Translate"><svg><use href="#translate"/></svg></button><button aria-label="Share"><svg><use href="#share"/></svg></button><button aria-label="Bookmark"><svg><use href="#star"/></svg></button></div>
    <button aria-label="Extensions"><svg><use href="#puzzle"/></svg></button><button aria-label="Media"><svg><use href="#music"/></svg></button><button aria-label="Side panel"><svg><use href="#panel"/></svg></button><button aria-label="Profile"><span class="ava rust">B</span></button><button aria-label="Menu"><svg><use href="#dots"/></svg></button>
  </nav>
  <div class="app">
    <aside class="side">
      <div class="qf"><button><svg class="s14"><use href="#qf"/></svg><span>Quick find</span><kbd>^K</kbd></button></div>
      <button class="fold" aria-label="Collapse sidebar"><svg class="s10"><use href="#left"/></svg></button>
      <div class="org"><span class="obox"><svg class="s16"><use href="#org"/></svg></span><strong>Big's Organization</strong><svg class="s14"><use href="#updown"/></svg></div>
      <a class="space" href="#bubble"><svg class="s16"><use href="#bub"/></svg>Bubble DeFi</a>
      <a class="newsp" href="#new"><svg class="s14"><use href="#plus-thin"/></svg>New Space</a>
      <div class="sfoot">
        <a href="#import"><svg class="s14"><use href="#imp"/></svg>Import content</a>
        <a href="#templates"><svg class="s14"><use href="#page"/></svg>Templates</a>
        <div class="sbtns"><button aria-label="Notifications"><svg class="s18"><use href="#bell"/></svg></button><button class="add" aria-label="Create"><svg class="s18"><use href="#plus-thin"/></svg></button><button aria-label="Settings"><svg class="s18"><use href="#gear-l"/></svg></button></div>
      </div>
    </aside>
    <div class="book">
      <header class="bhead"><svg class="blogo"><use href="#bub"/></svg><h1>Bubble DeFi</h1><span class="pill">Modified</span><button class="plus" aria-label="Invite"><svg class="s14"><use href="#plus-thin"/></svg></button><span class="who">B</span><button class="more" aria-label="More"><svg class="s16"><use href="#dots"/></svg></button></header>
      <nav class="btabs"><a href="#history"><svg class="s14"><use href="#hist"/></svg>History</a><a href="#discussions"><svg class="s14"><use href="#disc"/></svg>Discussions</a><a href="#files-tab"><svg class="s14"><use href="#pic"/></svg>Files</a><button class="more" aria-label="Collapse"><svg class="s10"><use href="#up"/></svg></button></nav>
      <div class="cols">
        <nav class="toc">
          <a href="#t1"><svg><use href="#e-splash"/></svg>Introduction BubbleSwap</a>
          <a href="#t2"><svg><use href="#e-pill"/></svg>Liquidity Crunch Terminus</a>
          <a href="#t3"><svg><use href="#e-scale"/></svg>Decentralized Exchange<svg class="chev"><use href="#down"/></svg></a>
          <div class="kids">
            <a href="#k1"><svg><use href="#e-hands"/></svg>BubbleSwap</a>
            <a href="#k2"><svg><use href="#e-drop"/></svg>Liquidity Farming</a>
            <a href="#k3"><svg><use href="#e-dna"/></svg>Synthethic Yield Farming</a>
            <a href="#k4"><svg><use href="#e-farmer"/></svg>Real Yield Farming</a>
            <a class="two" href="#k5"><svg><use href="#e-yen"/></svg><span>Delta Neutral Aggregated Market Making</span></a>
            <a href="#k6"><svg><use href="#e-chart"/></svg>sAPY</a>
          </div>
          <a href="#t4"><svg><use href="#e-hotel"/></svg>BubbleSwap DAO</a>
          <a href="#t5"><svg><use href="#e-scope"/></svg>Our Vision</a>
          <a href="#t6"><svg><use href="#e-bars"/></svg>Our Mission</a>
          <a class="on" href="#t7"><svg><use href="#e-coin"/></svg>Tokenomics<svg class="chev"><use href="#down"/></svg></a>
          <div class="kids"><a href="#k7"><svg><use href="#e-bank"/></svg>Bubble Treasury</a></div>
          <a href="#t8"><svg><use href="#e-map"/></svg>Roadmap</a>
          <a href="#t9"><svg><use href="#e-lock"/></svg>Audit &amp; Contract</a>
          <a href="#t10"><svg><use href="#e-link"/></svg>Official Links</a>
          <a class="np" href="#np"><svg><use href="#pages"/></svg>New page</a>
        </nav>
        <div class="page">
          <article class="doc">
            <div class="row title"><svg class="coin"><use href="#e-coin"/></svg><h2>Tokenomics</h2></div>
            <div class="row sub"><p>Token distribution breakdown</p></div>
            <div class="row para"><button class="grip" aria-label="Drag"><svg class="s14"><use href="#grip"/></svg></button><p>5% is <u>taxed</u> on <u>both</u> <u>buy</u> <u>and</u> <u>sell</u> <u>trades</u> <u>with</u> $BUB pairs <u>which</u> <u>will</u> <u>be</u> <u>burned</u> <u>and</u> <u>added</u> <u>to</u> <u>the</u><br><u>liquidity</u> pool in order <u>to</u> <u>provide</u> <u>deeper</u> <u>liquidity</u> <u>for</u> <u>the</u> community.</p><button class="cmt" aria-label="Comment"><svg class="s14"><use href="#disc"/></svg></button></div>
            <div class="row lp"><p>3% <u>will</u> <u>be</u> <u>used</u> <u>for</u> LP</p></div>
            <div class="row two-pc"><button class="grip" aria-label="Drag"><svg class="s14"><use href="#grip"/></svg></button><p>2%<span class="cursor"></span></p></div>
            <ul>
              <li><svg><use href="#e-cam"/></svg>15% Marketing</li>
              <li><svg><use href="#e-purse"/></svg><span>25% <u>Presale</u></span></li>
              <li><svg><use href="#e-globe"/></svg><span>20% <u>Bubble</u> Protocol</span></li>
              <li><svg><use href="#e-drop"/></svg><span>20% <u>Liquidity</u></span></li>
              <li><svg><use href="#e-judge"/></svg><span>20% <u>Bubble</u> <u>Treasury</u></span></li>
            </ul>
            <div class="row graphic"><strong>*TOKENOMIC GRAPHIC*</strong></div>
            <div class="pager">
              <a href="#prev"><svg class="s18"><use href="#back"/></svg><span class="r"><small>Previous</small>Our Mission</span></a>
              <a href="#next"><span><small>Next</small>Bubble Treasury</span><svg class="s18"><use href="#fwd"/></svg></a>
            </div>
            <div class="mod"><span class="av photo"><svg viewBox="0 0 24 24"><circle cx="12" cy="12" r="12" fill="#6f9ccb"/><path d="M2 18q0-8 6-9 0-5 5-5 4 1 4 6l6 5q-2 8-11 8-8 0-10-5z" fill="#333c34"/><path d="M4 14q5-2 7 2l1 7q-7 0-9-5z" fill="#a3ac8b"/><path d="M9 5h4v3H9z" fill="#e0b64a"/></svg></span><span class="av orange">S</span><span class="av violet">B</span><span class="mtext">Last modified 2m ago</span></div>
          </article>
          <aside class="acts">
            <a href="#a1"><svg><use href="#pages"/></svg>Insert subpage</a>
            <a href="#a2"><svg><use href="#imp"/></svg>Import subpages</a>
            <a href="#a3"><svg><use href="#pic"/></svg>Add cover</a>
            <a href="#a4"><svg><use href="#tee"/></svg>Rename</a>
            <a href="#a5"><svg><use href="#dup"/></svg>Duplicate</a>
            <a href="#a6"><svg><use href="#bin"/></svg>Delete</a>
            <a class="gap" href="#a7"><svg><use href="#page"/></svg>Page Layout</a>
            <a class="gap" href="#a8"><svg><use href="#pdf"/></svg>Export as PDF</a>
            <a href="#a9"><svg><use href="#chain"/></svg>Copy link</a>
          </aside>
        </div>
      </div>
      <footer class="bbar">
        <button class="draft"><svg class="s16"><use href="#branch"/></svg>Draft</button><span class="av violet big">B</span>
        <div class="subj"><input type="text" placeholder="Enter a subject" aria-label="Subject"><div class="meta"><span>#100 created 2m ago by you</span><span class="dot">•</span><svg class="s16"><use href="#clock"/></svg><span>2m</span><svg class="s14 ln"><use href="#lines"/></svg><span>2</span><svg class="s16 ln"><use href="#disc"/></svg><span>0</span></div></div>
        <svg class="s16 pm"><use href="#pm"/></svg><label class="diff" for="diff">Diff view</label><input class="tog" id="diff" type="checkbox"><hr>
        <div class="merge"><button><svg class="s14"><use href="#merge"/></svg>Merge</button><button class="mc" aria-label="Merge options"><svg class="s10"><use href="#up"/></svg></button></div>
        <button class="bx" aria-label="More"><svg class="s14"><use href="#dots"/></svg></button><button class="bx" aria-label="Close"><svg class="s10"><use href="#x-thin"/></svg></button>
      </footer>
    </div>
  </div>
  <footer class="task task-right">
    <div class="apps">
      <button aria-label="Start"><svg class="s18"><use href="#win"/></svg></button><button aria-label="Search"><svg class="s18"><use href="#search-l"/></svg></button><button aria-label="Task view"><svg class="s18"><use href="#tview"/></svg></button><button class="run" aria-label="Telegram"><svg><use href="#tg"/></svg><em class="bd red">..58</em></button><button aria-label="TradingView"><svg><use href="#tv"/></svg></button><button aria-label="Chrome"><svg><use href="#chrome"/></svg></button><button aria-label="Explorer"><svg><use href="#files"/></svg></button><button class="run" aria-label="WhatsApp"><svg><use href="#wa"/></svg></button><button class="run" aria-label="Discord"><svg><use href="#discord"/></svg><em class="bd rose">1</em></button><button class="run cur" aria-label="Chrome B"><svg><use href="#chrome"/></svg><em class="bd rust">B</em></button><button class="run" aria-label="Edge"><svg><use href="#edge"/></svg></button><button class="run" aria-label="Chrome A"><svg><use href="#chrome"/></svg><em class="bd sky">A</em></button>
    </div>
    <time class="clk">19:21<br>4/12/2022</time>
  </footer>
</section>
</main>
</body>
</html>
```
FILE: styles.css
```css
* { box-sizing: border-box; }
body { margin: 0; background: #fff; font-family: "Open Sans", "Noto Sans", sans-serif; }
button, input { font: inherit; color: inherit; background: none; border: 0; padding: 0; margin: 0; outline: 0; }
button { display: inline-flex; align-items: center; justify-content: center; cursor: pointer; flex: none; }
a { color: inherit; text-decoration: none; }
svg { display: block; flex: none; overflow: visible; }
h1, h2, h3, p, ul { margin: 0; padding: 0; font-weight: inherit; }
hr { border: 0; margin: 0; }
em, i { font-style: normal; }
.sprite { position: absolute; width: 0; height: 0; }
.s10 { width: 10px; height: 10px; }
.s14 { width: 14px; height: 14px; }
.s16 { width: 16px; height: 16px; }
.s18 { width: 18px; height: 18px; }
.s20 { width: 20px; height: 20px; }
.s22 { width: 22px; height: 22px; }

.desk { display: flex; align-items: flex-start; min-height: 100vh; }
.win { display: flex; flex-direction: column; min-width: 0; overflow: hidden; }
.win-left { flex: 3 1 0; height: 75vh; }
.win-right { flex: 4 1 0; height: 100vh; }

/* browser frame */
.tabs { display: flex; flex: none; color: #dfe1e5; }
.win-left .tabs { height: 39px; background: #3c4043; padding-left: 9px; font-size: 13px; }
.win-right .tabs { height: 31px; background: #000; padding-left: 7px; font-size: 11px; color: #e8eaed; }
.tab { display: flex; align-items: center; flex: none; }
.win-left .tab { width: 274px; padding: 0 10px 0 13px; }
.win-right .tab { width: 219px; padding: 0 8px 0 10px; }
.win-left .tab.on { background: #35363a; border-radius: 9px 9px 0 0; }
.win-right .tab.on { background: #353535; border-radius: 8px 8px 0 0; }
.fav { width: 17px; height: 17px; margin-right: 10px; }
.win-right .fav { width: 15px; height: 15px; margin-right: 8px; }
.c-lav { color: #8e9cf0; background: #12182a; border-radius: 8px; }
.c-blue { color: #3b82f6; }
.tt { flex: 1; min-width: 0; white-space: nowrap; }
.fade { mask-image: linear-gradient(90deg, #000 88%, #0005); }
.cls { width: 18px; height: 18px; }
.win-right .cls { width: 14px; height: 14px; }
.cls svg { width: 13px; height: 13px; }
.win-right .cls svg { width: 11px; height: 11px; }
.tab.sep { border-right: 1px solid #55585c; border-image: linear-gradient(transparent 20%, #55585c 20%, #55585c 80%, transparent 80%) 1; }
.newtab { width: 50px; }
.win-right .newtab { width: 42px; }
.newtab svg { width: 17px; height: 17px; }
.win-right .newtab svg { width: 14px; height: 14px; }
.wctl { display: flex; margin-left: auto; color: #8f9296; }
.wctl button { width: 52px; height: 34px; }
.wctl svg { width: 13px; height: 13px; }
.win-right .wctl { color: #fff; }
.win-right .wctl button { width: 42px; height: 26px; }
.win-right .wctl svg { width: 11px; height: 11px; }

.bar { display: flex; align-items: center; flex: none; color: #f1f3f4; }
.win-left .bar { height: 42px; background: #35363a; padding: 0 6px 3px 7px; border-bottom: 1px solid #4a4b4e; }
.win-right .bar { height: 34px; background: #353535; padding: 0 5px 0 5px; border-bottom: 1px solid #6a6a6a; }
.bar button { width: 37px; height: 26px; }
.win-right .bar button { width: 30px; }
.bar button svg { width: 19px; height: 19px; }
.win-right .bar button svg { width: 16px; height: 16px; }
.bar .dim { color: #85878a; }
.omni { flex: 1; display: flex; align-items: center; background: #202124; color: #c4c7c9; }
.win-left .omni { height: 32px; border-radius: 16px; margin: 0 4px 0 5px; padding: 0 2px 0 13px; }
.win-right .omni { height: 26px; border-radius: 13px; margin: 0 4px 0 5px; padding: 0 0 0 8px; }
.lock { width: 15px; height: 15px; color: #9aa0a6; margin-right: 10px; }
.win-right .lock { width: 13px; height: 13px; margin-right: 9px; }
.url { flex: 1; color: #9aa0a6; font-size: 15px; white-space: nowrap; }
.win-right .url { font-size: 12px; }
.url b { font-weight: 400; color: #fff; }
.ava { display: grid; place-items: center; width: 25px; height: 25px; border-radius: 50%; color: #fff; font: 13px Roboto, sans-serif; }
.win-right .ava { width: 21px; height: 21px; font-size: 11px; }
.blue { background: #0288d1; }
.rust { background: #bf360c; }

/* Gmail */
.gmail { flex: 1; min-height: 0; display: grid; grid-template: 66px minmax(0, 1fr) 16px / 263px minmax(0, 1fr) 57px; background: #f6f8fc; font-family: Roboto, sans-serif; color: #444746; }
.ghead { grid-column: 1 / -1; display: flex; align-items: center; }
.brand { width: 263px; flex: none; display: flex; align-items: center; padding-left: 26px; }
.glogo { width: 32px; height: 32px; margin: 0 10px 0 20px; }
.gname { font-size: 23px; color: #5f6368; }
.gsearch { flex: 0 1 743px; height: 49px; background: #eaf1fb; border-radius: 8px; display: flex; align-items: center; padding: 0 20px; }
.gsearch input { flex: 1; font-size: 16px; margin-left: 19px; }
.gsearch input::placeholder { color: #5f6368; opacity: 1; }
.gtools { display: flex; align-items: center; margin-left: auto; padding-right: 18px; color: #5f6368; }
.gtools button { width: 45px; height: 45px; }
.gtools .acct { width: 33px; height: 33px; border-radius: 50%; background: #0288d1; color: #fff; font-size: 18px; margin-left: 11px; }
.gnav { grid-row: 2 / 4; padding-top: 9px; font-size: 15px; color: #202124; }
.compose { width: 147px; height: 57px; margin: 0 0 16px 8px; border-radius: 15px; background: #c2e7ff; color: #001d35; justify-content: flex-start; padding-left: 19px; gap: 19px; font-weight: 500; }
.gnav a { display: flex; align-items: center; height: 33px; width: 247px; padding: 0 12px 0 28px; border-radius: 0 17px 17px 0; }
.gnav a span { margin-left: 20px; flex: 1; }
.gnav a svg { color: #444746; }
.gnav a .s14 { margin: 0 2px; }
.gnav i { font-size: 13px; }
.gnav .on { background: #d3e3fd; font-weight: 700; color: #001d35; }
.gnav .on svg { color: #0b1f4f; }
.gnav .bold span { font-weight: 700; }
.labels { display: flex; justify-content: space-between; align-items: center; width: 247px; height: 24px; margin-top: 26px; padding: 0 10px 0 27px; font-size: 17px; font-weight: 500; }
.gcard { background: #fff; border-radius: 15px; overflow: hidden; display: flex; flex-direction: column; min-height: 0; }
.gbar { display: flex; align-items: center; height: 50px; flex: none; margin-right: 18px; padding: 0 15px 0 5px; border-bottom: 1px solid #dcdddf; box-shadow: 0 1px 2px #0001; color: #444746; position: relative; }
.gbar button { width: 45px; height: 36px; }
.gbar button svg { width: 18px; height: 18px; }
.gbar .first { margin-right: 13px; }
.gbar .dd { width: 36px; }
.gbar hr { width: 1px; height: 20px; background: #dcdddf; margin: 0 8px; }
.count { margin: 0 11px 0 auto; font-size: 12px; color: #5f6368; }
.gbar .pg { width: 40px; }
.gbar .pg svg { width: 14px; height: 14px; }
.gbar .faint { color: #b9bbbd; }
.gbar .kb { width: 40px; margin-left: 9px; gap: 5px; }
.gbar .kb .s20 { width: 20px; height: 20px; }
.gbar .kb .s10 { width: 10px; height: 10px; }
.gscroll { flex: 1; min-height: 0; position: relative; overflow: hidden; display: flex; justify-content: center; padding-left: 41px; }
.thumb { position: absolute; right: 0; top: 40%; width: 12px; height: 45%; background: #c8c8c8; }
.mail { width: 564px; background: #e3e3e3; padding: 0 17px; display: flex; flex-direction: column; gap: 16px; font: 14px/17px "Liberation Sans", Arial, sans-serif; color: #55585f; }
.mcard { background: #fff; padding: 12px 41px 25px; border-radius: 0 0 12px 12px; flex: none; }
.mail h3 { font-size: 16px; line-height: 20px; font-weight: 700; color: #222530; }
.login { width: fit-content; margin-top: 16px; padding: 12px 18px 11px 17px; border-radius: 11px; background: #f5f5f5; display: flex; flex-direction: column; gap: 2px; font-size: 15px; line-height: 22px; color: #33353d; }
.login a { font-size: 18px; line-height: 28px; font-weight: 700; color: #1155cc; text-decoration: underline; text-underline-offset: 3px; text-decoration-thickness: 2px; }
.mail h2 { margin-top: 79px; font-size: 25px; line-height: 30px; font-weight: 700; color: #222530; }
.mail p { margin-top: 19px; white-space: nowrap; }
.mail p a { color: #ff9430; }
.link { width: 100%; height: 49px; margin: 33px 0 14px; border-radius: 11px; background: #fc7a00; color: #fff; font-size: 18px; }
.mcard.second { flex: 1; border-radius: 12px 12px 0 0; padding: 25px 0 0; }
.grizzly { display: flex; align-items: center; gap: 7px; padding-left: 41px; font: 600 22px/36px "Open Sans", sans-serif; color: #222530; }
.grizzly svg { width: 30px; height: 36px; }
.mail strong { display: block; margin: 14px 41px; font-size: 14px; line-height: 16px; color: #fc7a00; }
.mcard.second hr { height: 1px; background: #d5d5d5; }
.gside { display: flex; flex-direction: column; align-items: center; color: #1f1f1f; }
.gside button { height: 58px; width: 57px; }
.gside hr { width: 20px; height: 1px; background: #dcdddf; margin: 15px 0 16px; }
.gside .hide { margin-top: auto; height: 28px; }
.cal { font: 700 10px Roboto, sans-serif; fill: #4285f4; }

/* Windows taskbars */
.task { display: flex; align-items: center; flex: none; color: #fff; }
.task-left { height: 45px; background: linear-gradient(90deg, #4a212c 0, #441a22 25%, #43302a 31%, #46332b 45%, #452a22 60%, #4a2222 69%, #421a20 73%, #352028 77%, #1f2d33 80%, #22383a 88%, #22373b); }
.task-right { height: 37px; background: linear-gradient(90deg, #4a212c 0, #44181f 29%, #4a2020 30%, #432f24 32%, #46332b 42%, #432b21 54%, #45261f 70%, #26211f 72%, #25251d 77%, #20343a 81%, #22383b); }
.start { width: 55px; height: 45px; }
.tsearch { width: 393px; height: 100%; display: flex; align-items: center; background: #333; border: 1px solid #5a5a5a; padding-left: 13px; }
.tsearch input { flex: 1; min-width: 0; font-size: 16px; margin-left: 12px; }
.tsearch input::placeholder { color: #dedede; opacity: 1; }
.eleph { width: 88px; height: 43px; }
.tv { width: 55px; }
.apps { display: flex; height: 100%; margin-left: 2px; }
.task-right .apps { margin-left: 0; }
.apps button { position: relative; width: 57px; height: 100%; }
.apps svg { width: 28px; height: 28px; }
.task-right .apps button { width: 45px; }
.task-right .apps svg { width: 24px; height: 24px; }
.task-right .apps .s18 { width: 18px; height: 18px; }
.run::after { content: ""; position: absolute; left: 5px; right: 5px; bottom: 0; height: 3px; background: #76b9ed; }
.task-right .run::after { left: 4px; right: 4px; height: 2px; }
.cur { background: #ffffff30; }
.cur::after, .task-right .cur::after { left: 0; right: 0; }
.bd { position: absolute; left: 28px; top: 23px; min-width: 16px; height: 16px; border-radius: 8px; display: grid; place-items: center; font: 11px/16px Roboto, sans-serif; color: #fff; }
.task-right .bd { left: 22px; top: 18px; min-width: 14px; height: 14px; font-size: 10px; line-height: 14px; }
.bd.red { background: #e8403a; border-radius: 4px; }
.bd.rose { background: #f0565c; }
.bd.rust { background: #bf360c; }
.bd.sky { background: #0288d1; }
.gh { margin-left: 153px; }
.gh svg { width: 28px; height: 28px; }
.tray { margin-left: auto; display: flex; align-items: center; height: 100%; padding-right: 7px; font-size: 14px; }
.cloud { width: 28px; height: 24px; margin-right: 9px; }
.wx { width: 93px; font-size: 15px; white-space: nowrap; margin-right: 14px; }
.tray button { width: 27px; }
.tray button svg { width: 19px; height: 19px; }
.lang { width: 30px; margin: 0 13px 0 6px; font-size: 13px; text-align: center; }
.clk { width: 70px; text-align: center; font-size: 13px; line-height: 21px; white-space: nowrap; }
.tray .nt { width: 60px; position: relative; }
.nt em { position: absolute; left: 29px; top: 4px; width: 18px; height: 18px; border-radius: 50%; background: #3a4647; border: 1px solid #8a9192; font-size: 11px; line-height: 16px; }
.task-right .clk { margin-left: auto; width: 66px; font-size: 11px; line-height: 17px; }

/* GitBook */
.app { flex: 1; min-height: 0; display: grid; grid-template-columns: 219px minmax(0, 1fr); background: #1a1d20; color: #d0d4da; font: 13px "Inter", sans-serif; }
.side { position: relative; display: flex; flex-direction: column; border-right: 1px solid #30353b; min-height: 0; }
.qf { height: 59px; padding: 14px 14px 0; border-bottom: 1px solid #30353b; }
.qf button { width: 190px; height: 31px; border: 1px solid #2d343e; border-radius: 4px; background: #232a33; padding: 0 4px 0 11px; gap: 7px; color: #b6bbc6; }
.qf span { flex: 1; text-align: left; }
.qf kbd { width: 26px; height: 22px; border-radius: 3px; background: #346ddb; color: #fff; font: 700 11px/22px "Inter", sans-serif; text-align: center; }
.fold { position: absolute; right: -10px; top: 49px; width: 19px; height: 19px; border-radius: 50%; background: #2c3440; border: 1px solid #3a4352; z-index: 2; }
.org { display: flex; align-items: center; height: 22px; margin: 22px 18px 8px 15px; color: #a9afbc; }
.obox { width: 22px; height: 22px; border-radius: 3px; background: #23272f; display: grid; place-items: center; margin-right: 7px; }
.org strong { flex: 1; font-size: 14px; font-weight: 600; color: #f0f3f8; }
.space { display: flex; align-items: center; gap: 10px; height: 30px; padding-left: 18px; background: #242b33; color: #f0f3f8; font-weight: 600; }
.newsp { display: flex; align-items: center; gap: 11px; height: 24px; margin-top: 11px; padding-left: 19px; color: #8e94a4; }
.sfoot { margin-top: auto; border-top: 1px solid #30353b; padding-top: 7px; color: #9aa0b0; }
.sfoot a { display: flex; align-items: center; gap: 11px; height: 30px; padding-left: 19px; }
.sbtns { display: flex; justify-content: space-between; align-items: center; height: 66px; padding: 0 22px; color: #c6cad2; }
.sbtns button { width: 22px; height: 36px; }
.sbtns .add { width: 37px; height: 37px; border-radius: 50%; background: #346ddb; color: #fff; }
.book { display: flex; flex-direction: column; min-height: 0; min-width: 0; }
.bhead { display: flex; align-items: center; flex: none; height: 59px; padding: 0 39px 0 37px; border-bottom: 1px solid #2b3037; }
.blogo { width: 29px; height: 29px; margin-right: 14px; }
.bhead h1 { flex: 1; font-size: 22px; font-weight: 700; color: #e9f0f8; }
.pill { height: 22px; border: 1px solid #36404f; border-radius: 11px; padding: 0 7px; font-size: 11px; line-height: 20px; font-weight: 500; margin-right: 17px; }
.plus { width: 30px; height: 30px; border-radius: 50%; background: #2a2f38; border: 1px solid #343b47; z-index: 1; }
.who { width: 26px; height: 26px; border-radius: 50%; background: #ab47bc; color: #fff; margin-left: -5px; font: 14px/26px Roboto, sans-serif; text-align: center; }
.more { width: 24px; height: 24px; margin-left: 15px; color: #9aa0b0; }
.btabs { display: flex; align-items: center; flex: none; height: 38px; padding: 0 39px 0 40px; gap: 28px; border-bottom: 1px solid #353d4d; box-shadow: 0 2px 4px #0006; z-index: 1; }
.btabs a { display: flex; align-items: center; gap: 7px; font-size: 13px; }
.btabs .more { margin-left: auto; color: #d0d4da; }
.cols { flex: 1; min-height: 0; display: grid; grid-template-columns: 275px minmax(0, 1fr); }
.toc { background: #14171c; border-right: 1px solid #2d333b; padding: 14px 0 0 22px; font-weight: 500; color: #c8ccd2; }
.toc a { display: flex; align-items: center; gap: 15px; height: 37px; padding: 0 18px 0 15px; white-space: nowrap; }
.toc svg { width: 16px; height: 16px; }
.toc .chev { width: 12px; height: 12px; margin-left: auto; }
.toc .on { background: #1a1d20; border: 1px solid #353d4d; border-right: 0; padding-left: 14px; color: #88a6ec; }
.toc .on .chev { color: #c8ccd2; }
.kids { margin-left: 15px; border-left: 1px solid #30363e; color: #9096a6; font-weight: 400; }
.kids a { height: 36px; padding-left: 14px; }
.kids .two { height: 57px; white-space: normal; line-height: 20px; }
.toc .np { margin-top: 13px; border-top: 1px solid #353d4d; height: 38px; color: #8e94a4; font-weight: 400; }
.page { display: flex; min-width: 0; }
.doc { width: 724px; flex: none; margin: 0 auto; padding-top: 21px; font-size: 15px; line-height: 22px; color: #dde2e8; }
.row { display: flex; position: relative; padding-left: 38px; }
.row > .coin { width: 23px; height: 23px; margin: 11px 15px 0 -38px; }
.title h2 { font-size: 36px; line-height: 44px; font-weight: 700; color: #e9f0f8; }
.sub { margin-top: 17px; font-size: 18px; line-height: 24px; color: #8e94a4; }
.para { margin-top: 32px; }
.para p { white-space: nowrap; }
.lp { margin-top: 21px; }
.two-pc { margin-top: 15px; }
.grip { width: 22px; height: 22px; margin: 0 11px 0 -33px; border: 1px solid #363d4b; border-radius: 50%; color: #e0e4ea; }
.cmt { position: absolute; left: 100%; top: 0; width: 29px; height: 29px; margin-left: 22px; border-radius: 50%; background: #232830; border: 1px solid #2c323c; color: #8e94a4; }
.doc u { text-decoration: underline wavy #e01212 1px; text-underline-offset: 2px; text-decoration-skip-ink: none; }
.two-pc p { display: flex; align-items: center; }
.cursor { width: 1px; height: 18px; background: #fff; }
.doc ul { list-style: none; margin-top: 36px; padding-left: 39px; display: flex; flex-direction: column; gap: 15px; }
.doc li { display: flex; align-items: center; gap: 7px; height: 22px; }
.doc li svg { width: 14px; height: 14px; margin-top: 4px; }
.graphic { margin-top: 21px; }
.graphic strong { font-weight: 700; color: #e9f0f8; }
.pager { display: grid; grid-template-columns: 1fr 1fr; gap: 15px; margin: 138px 0 22px 38px; }
.pager a { display: flex; align-items: center; justify-content: space-between; height: 69px; padding: 0 15px; border: 1px solid #2b3037; border-radius: 4px; font-size: 14px; line-height: 20px; font-weight: 500; color: #e3e7ec; }
.pager svg { color: #9aa0b0; margin: 0 2px; }
.pager small { display: block; font-size: 11px; font-weight: 400; color: #8e94a4; }
.pager .r { text-align: right; }
.mod { display: flex; align-items: center; margin-left: 38px; border-top: 1px solid #2b3037; padding-top: 24px; }
.av { width: 25px; height: 25px; border-radius: 50%; color: #fff; font: 15px/25px Roboto, sans-serif; text-align: center; margin-right: -1px; flex: none; }
.photo { margin-left: 2px; }
.photo svg { width: 25px; height: 25px; }
.orange { background: #f4511e; }
.violet { background: #ab47bc; }
.mtext { margin-left: 13px; font-size: 13px; color: #8e94a4; }
.acts { flex: 0 0 273px; margin-left: 38px; padding: 22px 0 0 21px; font-size: 13px; color: #bcc0c8; }
.acts a { display: flex; align-items: center; height: 27px; gap: 7px; }
.acts svg { width: 14px; height: 14px; color: #9aa0b0; }
.acts .gap { margin-top: 16px; }
.bbar { display: flex; align-items: center; flex: none; height: 72px; padding: 0 14px 0 22px; border-top: 1px solid #353d4d; box-shadow: 0 -2px 3px #0006; z-index: 1; }
.draft { width: 76px; height: 31px; border: 1px solid #353d4d; border-radius: 16px; gap: 7px; font-size: 13px; color: #dde2e8; }
.av.big { width: 30px; height: 30px; margin: 0 15px 0 14px; font-size: 16px; line-height: 30px; }
.subj { flex: 1; color: #8e94a4; }
.subj input { display: block; width: 300px; height: 20px; font-size: 13px; }
.subj input::placeholder { color: #8e94a4; opacity: 1; }
.meta { display: flex; align-items: center; height: 22px; font-size: 11px; gap: 4px; }
.meta .dot { margin: 0 8px; }
.meta .ln { margin-left: 3px; }
.pm { margin-right: 7px; }
.diff { font-size: 13px; }
.tog { appearance: none; width: 32px; height: 19px; border-radius: 10px; background: #3a4150; margin: 0 15px 0 8px; padding: 2px; flex: none; }
.tog::before { content: ""; display: block; width: 15px; height: 15px; border-radius: 50%; background: #fff; }
.bbar hr { width: 1px; height: 29px; background: #2b3037; margin-right: 14px; }
.merge { display: flex; width: 111px; height: 29px; border-radius: 3px; background: #755bff; color: #fff; margin-right: 7px; }
.merge button { flex: 1; gap: 6px; font-weight: 500; }
.merge .mc { flex: 0 0 30px; border-left: 1px solid #5b43e0; }
.bx { width: 44px; height: 29px; }
```
